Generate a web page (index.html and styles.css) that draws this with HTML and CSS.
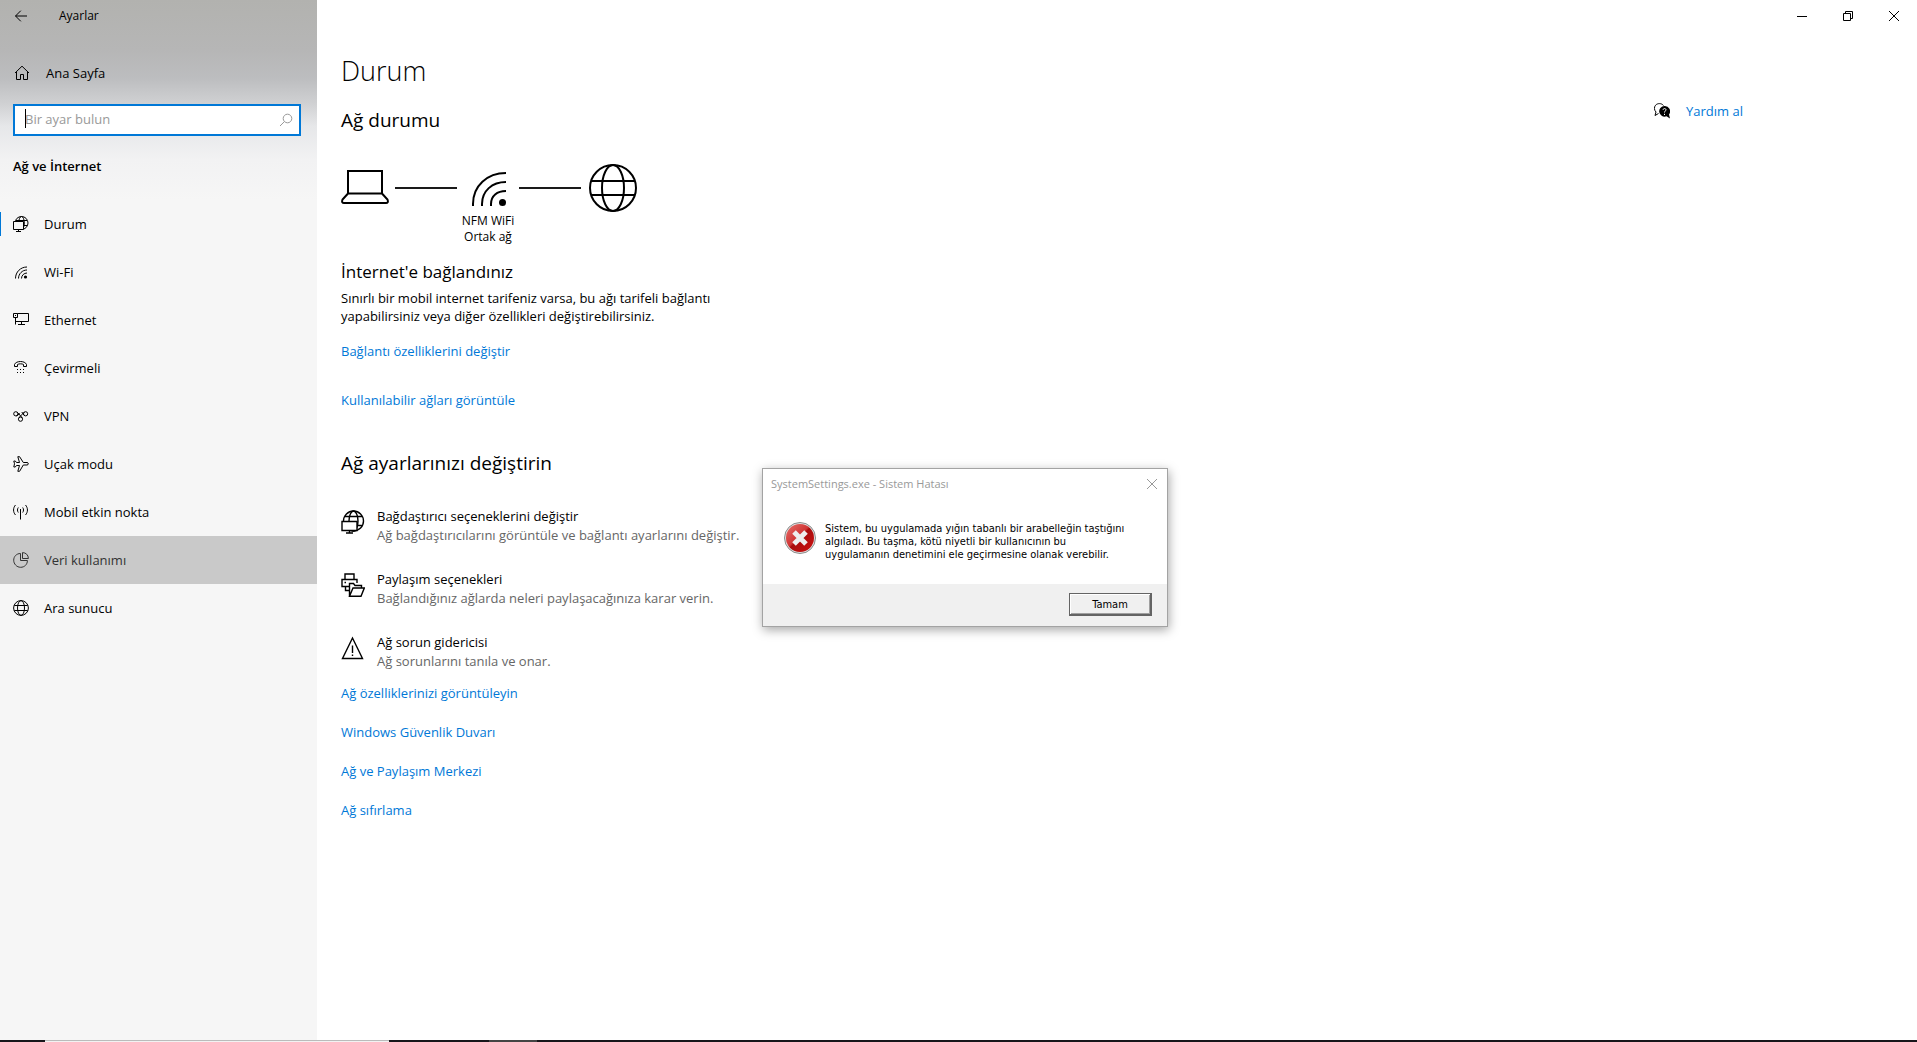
FILE: index.html
```html
<!DOCTYPE html>
<html lang="tr">

<head>
	<meta charset="utf-8">
	<title>Ayarlar</title>
	<link rel="stylesheet" href="styles.css">
</head>

<body>

	<div class="window">
		<div class="sidebar">
			<div class="titlebar">
				<button class="back" type="button" aria-label="Geri">
					<svg width="12" height="12" viewBox="0 0 12 12"><path d="M0.5 6H12M5.8 0.7L0.5 6L5.8 11.3" /></svg>
				</button>
				<span class="app-name">Ayarlar</span>
			</div>

			<a class="home" href="#">
				<svg width="16" height="16" viewBox="0 0 16 16"><path d="M1 8L8 1.2L15 8M2.5 7V14.5H6.5V9.5H9.5V14.5H13.5V7" /></svg>
				Ana Sayfa
			</a>

			<form class="search">
				<input type="text" placeholder="Bir ayar bulun" aria-label="Bir ayar bulun">
				<span class="caret"></span>
				<svg width="14" height="14" viewBox="0 0 14 14"><circle cx="8.5" cy="5.5" r="4.3" /><path d="M5.4 8.6L1 13" /></svg>
			</form>

			<h2 class="category">Ağ ve İnternet</h2>

			<ul class="nav">
				<li><a class="active" href="#">
					<svg width="16" height="16" viewBox="0 0 16 16"><circle cx="8.5" cy="7" r="6.5" /><ellipse cx="8.5" cy="7" rx="2.8" ry="6.5" /><path d="M3 4.5H14M3 9.5H14.500" /><path class="screen" d="M0.500 5.500H10.500V13.500H0.500Z" /><path d="M5.500 13.500V15.500M3 15.500H8" /></svg>
					Durum</a></li>
				<li><a href="#">
					<svg width="16" height="16" viewBox="0 0 16 16"><path d="M2.5 14.5C2.5 8 7.5 3 14 3M5.5 14.5C5.5 9.8 9.3 6 14 6M8.5 14.5C8.5 11.4 11 9 14 9" /><circle class="fill" cx="12.5" cy="13" r="1.6" /></svg>
					Wi-Fi</a></li>
				<li><a href="#">
					<svg width="16" height="16" viewBox="0 0 16 16"><path d="M4.5 1.5H15.5V9.5H2.5M0.5 1.5H4.5V5.5H0.5ZM2.5 5.500V12.500M8.5 9.500V12.500M5 12.500H12M2 3.500H3" /></svg>
					Ethernet</a></li>
				<li><a href="#">
					<svg width="16" height="16" viewBox="0 0 16 16"><path d="M1.5 6.500V4.500C3 0.500 12 0.500 13.500 4.500V6.500H10.500V4.500C9 3.600 6 3.600 4.500 4.500V6.500Z" /><path d="M4 9.500h1m2 0h1m2 0h1M4 12.500h1m2 0h1m2 0h1" /></svg>
					Çevirmeli</a></li>
				<li><a href="#">
					<svg width="16" height="16" viewBox="0 0 16 16"><circle cx="2.8" cy="5.8" r="2.1" /><circle cx="12.6" cy="5.8" r="2.1" /><circle cx="7.5" cy="11.2" r="2.1" /><path d="M4.3 4.3L9.3 9.8M3.5 8L7 5.5M11.2 4.2L6 9.6M8.8 4L11 7.2" /></svg>
					VPN</a></li>
				<li><a href="#">
					<svg width="16" height="16" viewBox="0 0 16 16"><path d="M4.8 0.7H6.6L10.3 6.5H14C15.8 6.5 15.8 9 14 9H10.3L6.6 15.3H4.8L6.5 9.5H3.5L2.3 11H0.8L1.5 7.8L0.8 5H2.3L3.5 6.5H6.5Z" /></svg>
					Uçak modu</a></li>
				<li><a href="#">
					<svg width="16" height="16" viewBox="0 0 16 16"><path d="M7.5 5V15.5M5.3 3.5C4.2 5 4.2 7 5.3 8.5M9.7 3.5C10.8 5 10.8 7 9.7 8.5M2.5 1C-0.1 4 -0.1 8 2.5 11M12.5 1C15.1 4 15.1 8 12.5 11" /></svg>
					Mobil etkin nokta</a></li>
				<li><a class="pressed" href="#">
					<svg width="16" height="16" viewBox="0 0 16 16"><path d="M7.5 1.5C3.5 1.5 0.7 4.5 0.7 8.2C0.7 12 3.8 15.3 7.6 15.3C11.5 15.3 14.4 12.5 14.4 8.5H7.5ZM9.5 0.6C12.8 0.6 15.4 3 15.4 6.5H9.5Z" /></svg>
					Veri kullanımı</a></li>
				<li><a href="#">
					<svg width="16" height="16" viewBox="0 0 16 16"><circle cx="8" cy="8" r="7.4" /><ellipse cx="8" cy="8" rx="3.5" ry="7.4" /><path d="M1.3 5.5H14.7M1.3 10.5H14.7" /></svg>
					Ara sunucu</a></li>
			</ul>
		</div>

		<div class="main">
			<div class="controls">
				<button type="button" aria-label="Simge durumuna küçült"><svg width="10" height="10" viewBox="0 0 10 10"><path d="M0 5.5H10" /></svg></button>
				<button type="button" aria-label="Önceki boyut"><svg width="10" height="10" viewBox="0 0 10 10"><path d="M0.5 2.5H7.5V9.5H0.5ZM2.5 2.5V0.5H9.5V7.5H7.5" /></svg></button>
				<button type="button" aria-label="Kapat"><svg width="10" height="10" viewBox="0 0 10 10"><path d="M0 0L10 10M10 0L0 10" /></svg></button>
			</div>

			<div class="page">
				<div class="content">
					<h1>Durum</h1>
					<h2>Ağ durumu</h2>

					<div class="diagram">
						<svg width="48" height="48" viewBox="0 0 48 48"><path d="M7 7H41V29.500H7ZM7 29.500L1.500 35.500C0.500 38 1.500 39 3 39H45C46.500 39 47.500 38 46.500 35.500L41 29.500" /></svg>
						<span class="line"></span>
						<div class="network">
							<svg width="50" height="48" viewBox="0 0 50 48"><path d="M10 42V40C10 22 24 9 43 9M19 42V40C19 27 29 18 43 18M28 42V40C28 32 34 27 43 27" /><circle class="fill" cx="39.500" cy="38.500" r="3.500" /></svg>
							<p>NFM WiFi<br>Ortak ağ</p>
						</div>
						<span class="line"></span>
						<svg width="50" height="48" viewBox="0 0 50 48"><circle cx="26" cy="24" r="23" /><ellipse cx="26" cy="24" rx="11" ry="23" /><path d="M4 17H48M4 31H48" /></svg>
					</div>

					<h3>İnternet'e bağlandınız</h3>
					<p class="info">Sınırlı bir mobil internet tarifeniz varsa, bu ağı tarifeli bağlantı yapabilirsiniz veya diğer özellikleri değiştirebilirsiniz.</p>
					<a class="link" href="#">Bağlantı özelliklerini değiştir</a>
					<a class="link" href="#">Kullanılabilir ağları görüntüle</a>

					<h2 class="change">Ağ ayarlarınızı değiştirin</h2>
					<ul class="options">
						<li><a href="#">
							<svg width="24" height="24" viewBox="0 0 24 24"><circle cx="12.500" cy="11" r="10" /><ellipse cx="12.500" cy="11" rx="4.500" ry="10" /><path d="M4 6.500H21M4 15.500H21" /><path class="screen" d="M1 11.500H16V20.500H1Z" /><path d="M8.500 20.500V23M5 23H12" /></svg>
							<span><b>Bağdaştırıcı seçeneklerini değiştir</b><i>Ağ bağdaştırıcılarını görüntüle ve bağlantı ayarlarını değiştir.</i></span>
						</a></li>
						<li><a href="#">
							<svg width="24" height="24" viewBox="0 0 24 24"><path d="M4 6V1H13V6M8 13.500H1V6.500H16V10M3.500 9.500H5M4.500 13.500V17.500H8" /><path d="M8.500 23.300V10.500H12.500L14 12.500H20.500V15M8.500 23.300L12 15H23.300L20 23.300Z" /></svg>
							<span><b>Paylaşım seçenekleri</b><i>Bağlandığınız ağlarda neleri paylaşacağınıza karar verin.</i></span>
						</a></li>
						<li><a href="#">
							<svg width="24" height="24" viewBox="0 0 24 24"><path d="M11.500 2L1.500 22.500H21.500ZM11.500 9.500V17M11.500 18.500V20" /></svg>
							<span><b>Ağ sorun gidericisi</b><i>Ağ sorunlarını tanıla ve onar.</i></span>
						</a></li>
					</ul>

					<div class="more">
						<a href="#">Ağ özelliklerinizi görüntüleyin</a>
						<a href="#">Windows Güvenlik Duvarı</a>
						<a href="#">Ağ ve Paylaşım Merkezi</a>
						<a href="#">Ağ sıfırlama</a>
					</div>
				</div>

				<a class="help" href="#">
					<svg width="16" height="16" viewBox="0 0 16 16"><path d="M4.500 10.500L1 12.500L2 9C0 7 0 4 1.500 2.300C3.500 0 7.500 0 9.500 2.500" /><path class="fill" d="M10.500 3A5.300 5.300 0 1 0 12.500 13.200L16 15.500L15 11.500A5.300 5.300 0 0 0 10.500 3Z" /><path class="mark" d="M9 6.800C9.200 5 12.300 5.200 12 7C11.800 8.100 10.500 8 10.500 9.500M10.500 10.800V12" /></svg>
					Yardım al
				</a>
			</div>
		</div>
	</div>

	<div class="taskbar">
		<span class="tab-search"></span>
		<span class="tab-open"></span>
	</div>

	<!-- error box -->
	<div class="dialog" role="dialog" aria-labelledby="dialog-title">
		<div class="dialog-head">
			<span id="dialog-title">SystemSettings.exe - Sistem Hatası</span>
			<button type="button" aria-label="Kapat"><svg width="10" height="10" viewBox="0 0 10 10"><path d="M0 0L10 10M10 0L0 10" /></svg></button>
		</div>
		<div class="dialog-body">
			<svg width="32" height="32" viewBox="0 0 32 32" stroke="none">
				<defs>
					<linearGradient id="red" x1="0" y1="0" x2="1" y2="1">
						<stop offset="0" stop-color="#e8706c" />
						<stop offset="0.45" stop-color="#cf3434" />
						<stop offset="0.5" stop-color="#a80c0c" />
						<stop offset="1" stop-color="#d01414" />
					</linearGradient>
				</defs>
				<circle class="rim" cx="16" cy="16" r="15.500" />
				<circle class="disc" cx="16" cy="16" r="14" fill="url(#red)" />
				<path class="cross" d="M10 10L22 22M22 10L10 22" />
			</svg>
			<p>Sistem, bu uygulamada yığın tabanlı bir arabelleğin taştığını algıladı. Bu taşma, kötü niyetli bir kullanıcının bu uygulamanın denetimini ele geçirmesine olanak verebilir.</p>
		</div>
		<div class="dialog-foot">
			<button type="button">Tamam</button>
		</div>
	</div>

</body>

</html>
```
FILE: styles.css
```css
* {
	padding: 0px;
	margin: 0px;
	box-sizing: border-box;
	list-style: none;
}

body {
	display: flex;
	flex-direction: column;
	min-height: 100vh;
	font-family: "Open Sans", "Noto Sans", sans-serif;
	font-size: 13px;
	line-height: 20px;
	color: #000;
	background-color: #fff;
}

a {
	color: #0078d7;
	text-decoration: none;
}

button {
	border: none;
	background: none;
	font-family: inherit;
}

svg {
	display: block;
	flex: none;
	fill: none;
	stroke: #000;
	stroke-width: 1;
}

svg .fill {
	fill: #000;
	stroke: none;
}

.window {
	flex: 1;
	display: grid;
	grid-template-columns: 317px 1fr;
}

/* left menu */
.sidebar {
	background: linear-gradient(#b2b2af 0px, #b6b6b6 50px, #bcbdbf 78px, #d0d1d3 104px, #e6e7e9 126px, #f2f2f3 160px, #f6f6f6 200px);
}

.titlebar {
	display: flex;
	align-items: center;
	height: 32px;
	padding-left: 15px;
	gap: 32px;
	font-size: 12px;
}

.home {
	display: flex;
	align-items: center;
	gap: 16px;
	height: 40px;
	margin-top: 21px;
	padding-left: 14px;
	color: #000;
}

.search {
	position: relative;
	margin: 11px 16px 0px 13px;
}

.search input {
	display: block;
	width: 100%;
	height: 32px;
	padding: 0px 32px 2px 10px;
	border: 2px solid #0078d7;
	outline: none;
	background-color: #fff;
	font-family: inherit;
	font-size: 13px;
}

.search input::placeholder {
	color: #999;
}

.search svg {
	position: absolute;
	top: 9px;
	right: 8px;
	stroke: #999;
}

.caret {
	position: absolute;
	top: 5px;
	left: 12px;
	width: 1px;
	height: 19px;
	background-color: #000;
}

.category {
	margin-top: 20px;
	padding-left: 13px;
	font-size: 13px;
	font-weight: 600;
	line-height: 20px;
}

.nav {
	margin-top: 24px;
}

.nav a {
	display: flex;
	align-items: center;
	gap: 15px;
	height: 48px;
	padding-left: 13px;
	color: #000;
}

.nav .active {
	background: linear-gradient(#0078d7, #0078d7) 0px 12px / 1px 24px no-repeat;
}

.nav .pressed {
	background-color: #c9c9c9;
	color: #333;
}

.nav .pressed svg {
	stroke: #333;
}

.nav .screen {
	fill: #f6f6f6;
}

/* right side */
.controls {
	display: flex;
	justify-content: flex-end;
	height: 32px;
}

.controls button {
	display: grid;
	place-items: center;
	width: 46px;
}

.page {
	display: flex;
	justify-content: space-between;
	padding: 19px 174px 0px 24px;
}

.content {
	width: 400px;
}

h1 {
	font-size: 27px;
	font-weight: 300;
	line-height: 40px;
}

h2 {
	margin-top: 15px;
	font-size: 19px;
	font-weight: 400;
	line-height: 28px;
}

.diagram {
	display: flex;
	align-items: flex-start;
	gap: 6px;
	margin-top: 30px;
}

.diagram svg {
	stroke-width: 2;
}

.line {
	width: 62px;
	height: 2px;
	margin-top: 23px;
	background-color: #1a1a1a;
}

.network p {
	margin: 1px -10px 0px;
	font-size: 12px;
	line-height: 16px;
	text-align: center;
}

h3 {
	margin-top: 15px;
	font-size: 17px;
	font-weight: 400;
	line-height: 24px;
}

.info {
	margin: 5px 0px 16px;
	line-height: 18px;
}

.link {
	display: block;
	margin-bottom: 29px;
}

.change {
	margin-top: 39px;
}

.options {
	margin-top: 29px;
}

.options li {
	margin-bottom: 24px;
}

.options a {
	display: flex;
	gap: 12px;
}

.options svg {
	margin-top: 4px;
	stroke-width: 1.4;
}

.options .screen {
	fill: #fff;
}

.options b,
.options i {
	display: block;
	font-weight: 400;
	font-style: normal;
	color: #000;
}

.options i {
	line-height: 19px;
	color: #666;
}

.more {
	display: flex;
	flex-direction: column;
	align-items: flex-start;
	gap: 19px;
	margin-top: -12px;
}

.help {
	display: flex;
	align-items: center;
	align-self: flex-start;
	gap: 16px;
	margin-top: 50px;
}

.help .mark {
	stroke: #fff;
}

.taskbar {
	display: flex;
	height: 2px;
	padding-left: 45px;
	gap: 100px;
	background-color: #17151a;
}

.tab-search {
	width: 344px;
	background-color: #f2f2f2;
	border-top: 1px solid #bbb;
}

.tab-open {
	width: 48px;
	background-color: #444;
}

/* error box */
.dialog {
	position: absolute;
	top: 468px;
	left: 762px;
	width: 406px;
	border: 1px solid #a3a3a3;
	background-color: #fff;
	box-shadow: 1px 3px 10px rgba(0, 0, 0, 0.35);
}

.dialog-head {
	display: flex;
	align-items: center;
	justify-content: space-between;
	height: 30px;
	padding: 0px 10px 0px 8px;
	font-size: 11px;
	color: #999;
}

.dialog-head svg {
	stroke: #999;
}

.dialog-body {
	display: flex;
	gap: 9px;
	height: 85px;
	padding: 23px 38px 0px 21px;
}

.dialog-body p {
	font-family: "DejaVu Sans Condensed", "DejaVu Sans", sans-serif;
	font-size: 11px;
	line-height: 13px;
}

.dialog-body .rim {
	fill: #e0e0e0;
	stroke: #8c8c8c;
}

.dialog-body .disc {
	stroke: none;
}

.dialog-body .cross {
	stroke: #eee;
	stroke-width: 5;
}

.dialog-foot {
	display: flex;
	justify-content: flex-end;
	padding: 9px 15px 10px;
	background-color: #f0f0f0;
}

.dialog-foot button {
	width: 83px;
	height: 23px;
	border: 1px solid #646464;
	border-width: 1px 2px 2px 1px;
	box-shadow: inset 1px 1px #fff, inset -1px -1px #a0a0a0;
	background-color: #f0f0f0;
	font-family: "DejaVu Sans Condensed", "DejaVu Sans", sans-serif;
	font-size: 11px;
}
```
